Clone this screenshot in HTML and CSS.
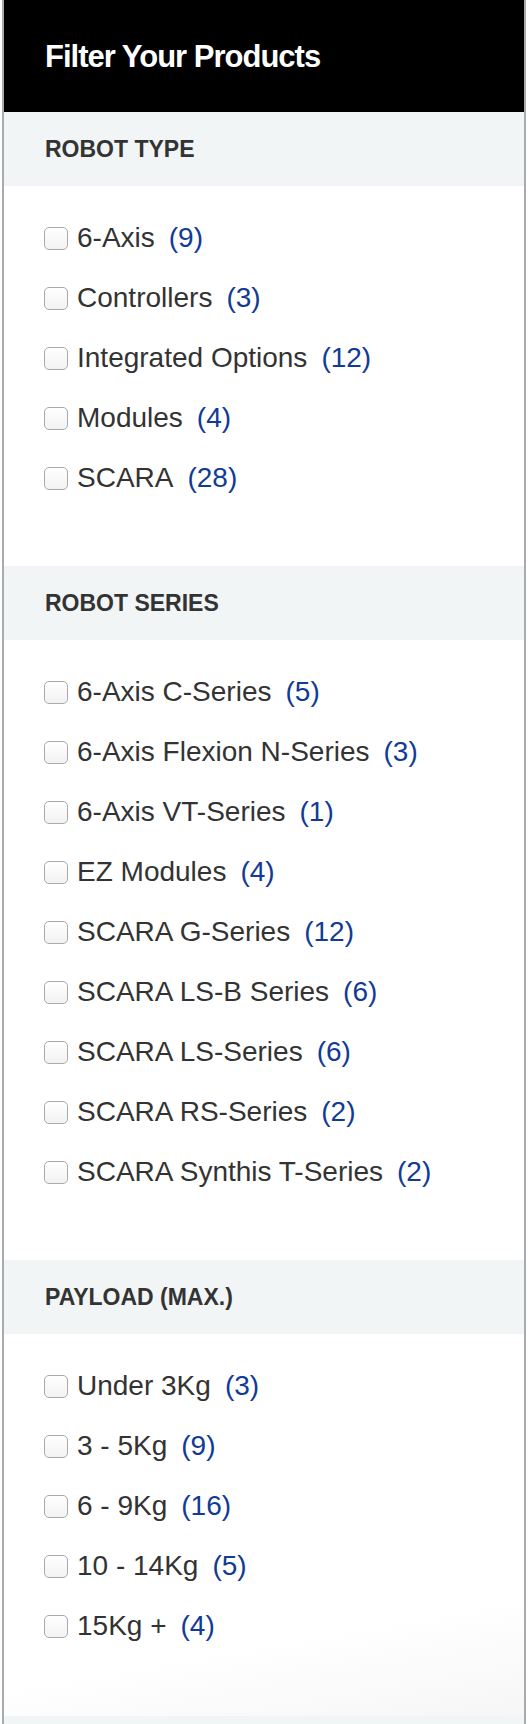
FILE: index.html
```html
<!DOCTYPE html>
<html lang="en">
<head>
<meta charset="utf-8">
<title>Filter Your Products</title>
<link rel="stylesheet" href="styles.css">
</head>
<body>
<aside class="panel">
  <header class="panel-head"><h1 class="panel-title">Filter Your Products</h1></header>

  <section class="group">
    <h2 class="group-title">ROBOT TYPE</h2>
    <ul class="opts">
      <li class="opt"><label><input type="checkbox" class="box"><span class="name">6-Axis</span><span class="count">(9)</span></label></li>
      <li class="opt"><label><input type="checkbox" class="box"><span class="name">Controllers</span><span class="count">(3)</span></label></li>
      <li class="opt"><label><input type="checkbox" class="box"><span class="name">Integrated Options</span><span class="count">(12)</span></label></li>
      <li class="opt"><label><input type="checkbox" class="box"><span class="name">Modules</span><span class="count">(4)</span></label></li>
      <li class="opt"><label><input type="checkbox" class="box"><span class="name">SCARA</span><span class="count">(28)</span></label></li>
    </ul>
  </section>

  <section class="group">
    <h2 class="group-title">ROBOT SERIES</h2>
    <ul class="opts">
      <li class="opt"><label><input type="checkbox" class="box"><span class="name">6-Axis C-Series</span><span class="count">(5)</span></label></li>
      <li class="opt"><label><input type="checkbox" class="box"><span class="name">6-Axis Flexion N-Series</span><span class="count">(3)</span></label></li>
      <li class="opt"><label><input type="checkbox" class="box"><span class="name">6-Axis VT-Series</span><span class="count">(1)</span></label></li>
      <li class="opt"><label><input type="checkbox" class="box"><span class="name">EZ Modules</span><span class="count">(4)</span></label></li>
      <li class="opt"><label><input type="checkbox" class="box"><span class="name">SCARA G-Series</span><span class="count">(12)</span></label></li>
      <li class="opt"><label><input type="checkbox" class="box"><span class="name">SCARA LS-B Series</span><span class="count">(6)</span></label></li>
      <li class="opt"><label><input type="checkbox" class="box"><span class="name">SCARA LS-Series</span><span class="count">(6)</span></label></li>
      <li class="opt"><label><input type="checkbox" class="box"><span class="name">SCARA RS-Series</span><span class="count">(2)</span></label></li>
      <li class="opt"><label><input type="checkbox" class="box"><span class="name">SCARA Synthis T-Series</span><span class="count">(2)</span></label></li>
    </ul>
  </section>

  <section class="group">
    <h2 class="group-title">PAYLOAD (MAX.)</h2>
    <ul class="opts opts-last">
      <li class="opt"><label><input type="checkbox" class="box"><span class="name">Under 3Kg</span><span class="count">(3)</span></label></li>
      <li class="opt"><label><input type="checkbox" class="box"><span class="name">3 - 5Kg</span><span class="count">(9)</span></label></li>
      <li class="opt"><label><input type="checkbox" class="box"><span class="name">6 - 9Kg</span><span class="count">(16)</span></label></li>
      <li class="opt"><label><input type="checkbox" class="box"><span class="name">10 - 14Kg</span><span class="count">(5)</span></label></li>
      <li class="opt"><label><input type="checkbox" class="box"><span class="name">15Kg +</span><span class="count">(4)</span></label></li>
    </ul>
  </section>

  <section class="group">
    <div class="group-title"></div>
  </section>
</aside>
</body>
</html>
```

FILE: styles.css
```css
* { box-sizing: border-box; }

html, body {
  margin: 0;
  padding: 0;
  background: #ffffff;
}

body {
  font-family: "Liberation Sans", Arial, Helvetica, sans-serif;
  color: #333333;
}

.panel {
  width: 524px;
  margin-left: 2px;
  border-left: 2px solid #a7abaf;
  border-right: 2px solid #a7abaf;
  background: #ffffff;
}

.panel-head {
  height: 112px;
  background: #000000;
  display: flex;
  align-items: center;
  padding-left: 41px;
}

.panel-title {
  margin: 0;
  color: #ffffff;
  font-size: 31px;
  font-weight: 700;
  letter-spacing: -1px;
  line-height: 1;
}

.group-title {
  margin: 0;
  height: 74px;
  display: flex;
  align-items: center;
  padding-left: 41px;
  background: #f1f5f5;
  color: #333333;
  font-size: 23px;
  font-weight: 700;
  letter-spacing: 0;
}

.opts {
  list-style: none;
  margin: 0;
  padding: 22px 0 58px 40px;
}

.opts-last {
  padding-bottom: 60px;
  background: linear-gradient(170deg, #ffffff 75%, #f6f6f6 100%);
}

.opt {
  height: 60px;
}

.opt label {
  height: 60px;
  display: flex;
  align-items: center;
}

.box {
  appearance: none;
  -webkit-appearance: none;
  margin: 0 9px 0 0;
  width: 24px;
  height: 23px;
  border: 1px solid #aaaaaa;
  border-radius: 5px;
  background: linear-gradient(#ffffff, #f2f2f2);
  flex: none;
}

.name {
  font-size: 28px;
  color: #333333;
}

.count {
  font-size: 28px;
  color: #123b95;
  margin-left: 14px;
}
```
